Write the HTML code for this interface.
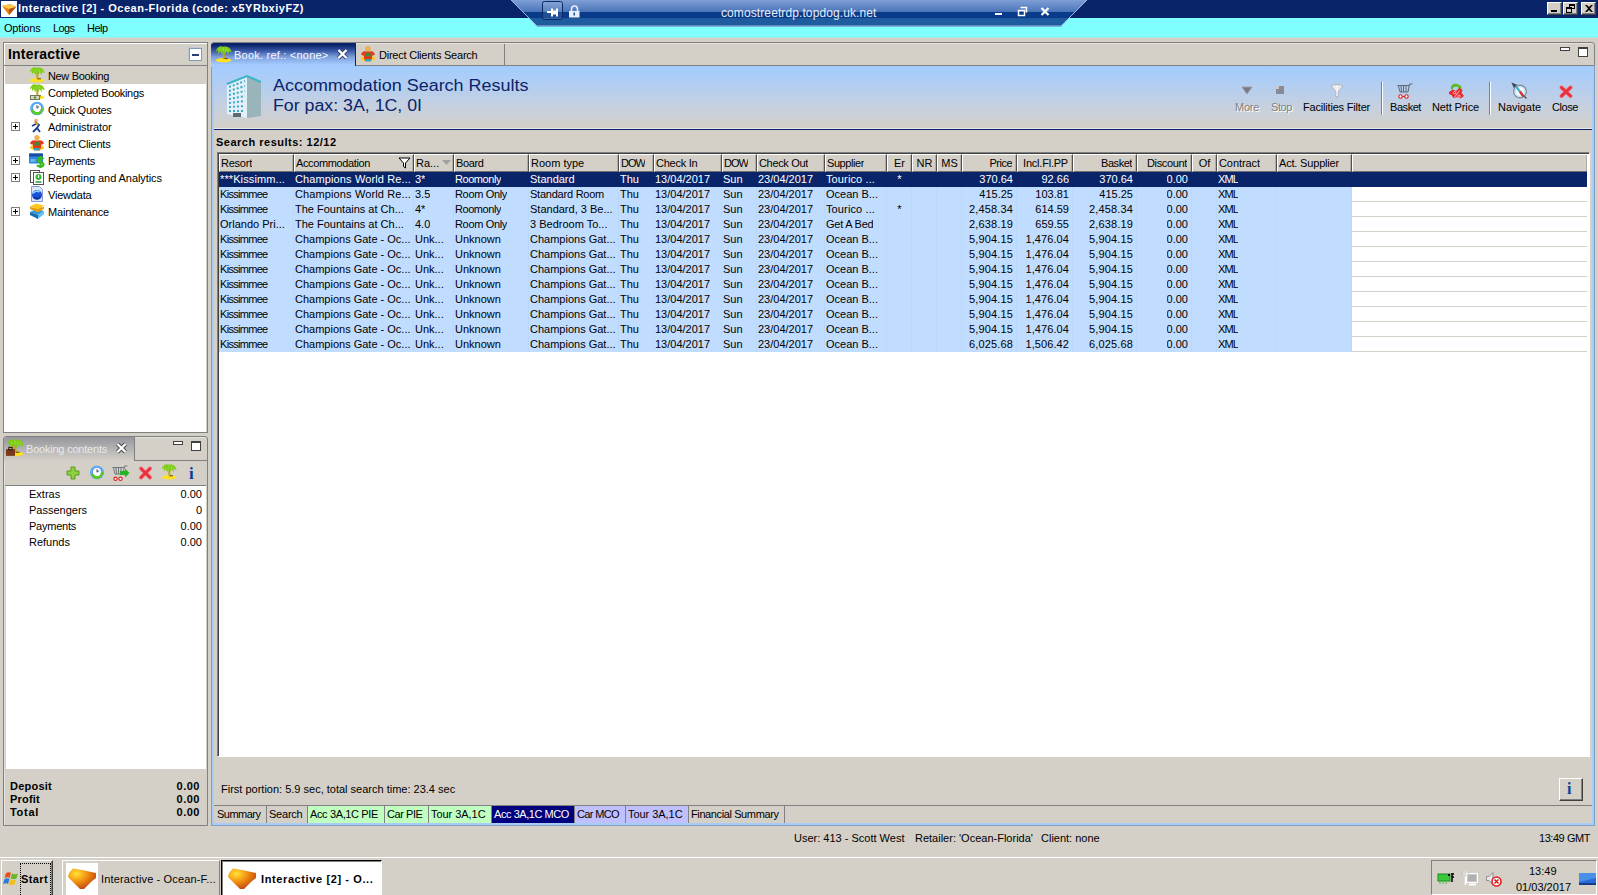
<!DOCTYPE html>
<html><head><meta charset="utf-8"><title>Interactive [2] - Ocean-Florida</title>
<style>
html,body{margin:0;padding:0}
body{width:1598px;height:895px;overflow:hidden;background:#d4d0c8;font-family:"Liberation Sans",sans-serif;font-size:11px;color:#000;position:relative}
.a{position:absolute;white-space:nowrap;box-sizing:border-box}
.t{position:absolute;white-space:nowrap;line-height:13px;height:13px}
svg{position:absolute;overflow:visible}
.b{font-weight:bold}
.w{color:#fff}
.g{color:#808080;text-shadow:1px 1px 0 #fff}
.hd{position:absolute;top:154px;height:18px;box-sizing:border-box;background:#d4d0c8;border-top:1px solid #fff;border-left:1px solid #fff;border-right:1px solid #505050;border-bottom:1px solid #707070;box-shadow:inset -1px 0 0 #b0aca4}
.row{position:absolute;left:219px;width:1133px;height:15px;background:#c0dcff}
.c{position:absolute;top:2px;line-height:13px;height:13px;white-space:nowrap;overflow:hidden}
.btab{position:absolute;top:806px;height:17px;box-sizing:border-box;border-right:1px solid #808080;line-height:16px;padding-left:3px;white-space:nowrap}
</style></head><body>
<div class="a " style="left:0px;top:0px;width:1598px;height:18px;background:#0a246a"></div>
<div class="a " style="left:0px;top:18px;width:1598px;height:19px;background:#80ffff"></div>
<div class="a " style="left:0px;top:37px;width:1598px;height:1px;background:#aae8e4"></div>
<div class="t b w" style="top:2px;left:18px;letter-spacing:.5px">Interactive [2] - Ocean-Florida (code: x5YRbxiyFZ)</div>
<div class="t " style="top:22px;left:4px;letter-spacing:-0.20px;">Options</div>
<div class="t " style="top:22px;left:53px;letter-spacing:-0.59px;">Logs</div>
<div class="t " style="top:22px;left:87px;letter-spacing:-0.53px;">Help</div>
<svg style="left:1px;top:1px" width="16" height="16" viewBox="0 0 16 16"><rect width="16" height="16" fill="#fff"/><path d="M1 5 L9 3 L15 6 L8 14 Z" fill="#e8851a"/><path d="M1 5 L9 3 L15 6 L8 8 Z" fill="#ffc84a"/><path d="M8 8 L15 6 L8 14 Z" fill="#b4500f"/></svg>
<div class="a" style="left:1547px;top:2px;width:15px;height:13px;background:#d4d0c8;border:1px solid;border-color:#fff #404040 #404040 #fff;box-shadow:inset -1px -1px 0 #808080"></div>
<div class="a " style="left:1551px;top:10px;width:6px;height:2px;background:#000"></div>
<div class="a" style="left:1563px;top:2px;width:15px;height:13px;background:#d4d0c8;border:1px solid;border-color:#fff #404040 #404040 #fff;box-shadow:inset -1px -1px 0 #808080"></div>
<div class="a " style="left:1569px;top:4px;width:6px;height:5px;border:1px solid #000;border-top-width:2px"></div>
<div class="a " style="left:1566px;top:7px;width:6px;height:6px;border:1px solid #000;border-top-width:2px;background:#d4d0c8"></div>
<div class="a" style="left:1581px;top:2px;width:15px;height:13px;background:#d4d0c8;border:1px solid;border-color:#fff #404040 #404040 #fff;box-shadow:inset -1px -1px 0 #808080"></div>
<svg style="left:1585px;top:5px" width="8" height="7" viewBox="0 0 8 7"><path d="M0 0h2l2 2 2-2h2L5 3.5 8 7H6L4 5 2 7H0l3-3.5z" fill="#000"/></svg>
<svg style="left:505px;top:0" width="590" height="30" viewBox="505 0 590 30">
<defs><linearGradient id="rg" x1="0" y1="0" x2="0" y2="1"><stop offset="0" stop-color="#7f9fd6"/><stop offset=".45" stop-color="#4a74b8"/><stop offset=".46" stop-color="#0a3a8a"/><stop offset=".68" stop-color="#0a3a8a"/><stop offset=".7" stop-color="#1f5c9f"/><stop offset="1" stop-color="#1f5c9f"/></linearGradient></defs>
<path d="M511 0 L1087 0 L1061 26.5 L537 26.5 Z" fill="url(#rg)"/>
<path d="M511 0 L537 26 L1061 26 L1087 0" fill="none" stroke="#9bb8e0" stroke-width="1"/>
<rect x="542.5" y="1.5" width="20" height="18" rx="2" fill="rgba(255,255,255,.1)" stroke="#0a2a66"/>
<path d="M547 12h5M552 8.500v8M553 11.500h4v2h-4zM557 8.500v8" stroke="#fff" stroke-width="2" fill="none"/>
<path d="M571.500 11.500v-2.500a3 3 0 0 1 6 0V11.500" stroke="#e8eefc" stroke-width="1.600" fill="none"/><rect x="569" y="11" width="10.500" height="6.500" fill="#e8eefc"/><rect x="573.500" y="12.500" width="1.500" height="3" fill="#1f4c8f"/>
<rect x="995" y="13" width="7" height="2" fill="#fff"/>
<path d="M1020.500 7.500h6v5M1018.500 10.500h6v5h-6z" stroke="#fff" stroke-width="1.500" fill="none"/>
<path d="M1041.500 8 l7 7 M1048.500 8 l-7 7" stroke="#fff" stroke-width="2.200"/>
</svg>
<div class="t " style="top:7px;left:721px;color:#e4ecf8;font-size:12px;letter-spacing:.1px">comostreetrdp.topdog.uk.net</div>
<div class="a " style="left:3px;top:42px;width:205px;height:391px;border:1px solid #808080;background:#d4d0c8;box-shadow:inset 1px 1px 0 #fff"></div>
<div class="t b" style="top:46px;left:8px;font-size:14px;line-height:17px;height:17px;letter-spacing:.2px">Interactive</div>
<div class="a " style="left:4px;top:65px;width:203px;height:1px;background:#808080"></div>
<div class="a " style="left:5px;top:66px;width:201px;height:366px;background:#fff"></div>
<div class="a " style="left:5px;top:66px;width:201px;height:18px;background:#d4d0c8"></div>
<div class="a " style="left:189px;top:48px;width:13px;height:13px;border:1px solid #7f9db9;background:#fff;box-shadow:-1px -1px 0 #c0c8d8"></div>
<div class="a " style="left:192px;top:54px;width:7px;height:1px;background:#2a3f7a;height:2px"></div>
<div class="t " style="top:70px;left:48px;letter-spacing:-0.35px;">New Booking</div>
<svg style="left:29px;top:67px" width="16" height="16" viewBox="0 0 16 16"><ellipse cx="8" cy="13.300" rx="7.500" ry="2" fill="#ffe11e"/><path d="M8.500 5C8 8 8 10 8.800 12.500" stroke="#c4a414" stroke-width="2" fill="none"/><path d="M9 11.800h3" stroke="#6a4a0a" stroke-width="1"/><path d="M7.500 .8C4.500 -.8 1.500 1.500 .8 5.500L2.800 3.800 3 7.500 5 4.800 6 8.200 7.800 5.200 9.500 8 10.800 5 12.500 8.200 13 5 15.500 6.200C15.500 2.500 12 -.5 7.500 .8Z" fill="#7ccc18"/><path d="M4 2.500l2 2M8 1.500v3M11 2l-1 3M13 3.500l-1 2" stroke="#a8e03c" stroke-width=".8" fill="none"/></svg>
<div class="t " style="top:87px;left:48px;letter-spacing:-0.31px;">Completed Bookings</div>
<svg style="left:29px;top:84px" width="16" height="16" viewBox="0 0 16 16"><ellipse cx="8" cy="13.300" rx="7.500" ry="2" fill="#ffe11e"/><path d="M8.500 5C8 8 8 10 8.800 12.500" stroke="#c4a414" stroke-width="2" fill="none"/><path d="M9 11.800h3" stroke="#6a4a0a" stroke-width="1"/><path d="M7.500 .8C4.500 -.8 1.500 1.500 .8 5.500L2.800 3.800 3 7.500 5 4.800 6 8.200 7.800 5.200 9.500 8 10.800 5 12.500 8.200 13 5 15.500 6.200C15.500 2.500 12 -.5 7.500 .8Z" fill="#7ccc18"/><path d="M4 2.500l2 2M8 1.500v3M11 2l-1 3M13 3.500l-1 2" stroke="#a8e03c" stroke-width=".8" fill="none"/><rect x="1" y="11" width="10" height="5" fill="#6a7a5a"/><rect x="2" y="12" width="8" height="3" fill="#cfe0b8"/><circle cx="6" cy="13.500" r="1.200" fill="#6a7a5a"/></svg>
<div class="t " style="top:104px;left:48px;letter-spacing:-0.26px;">Quick Quotes</div>
<svg style="left:29px;top:101px" width="16" height="16" viewBox="0 0 16 16"><circle cx="8" cy="7.500" r="6.800" fill="#2f8ff0"/><circle cx="8" cy="7.500" r="5.800" fill="none" stroke="#8cc8ff" stroke-width=".8"/><circle cx="8" cy="7" r="4.300" fill="#fff"/><path d="M8 4.200V7.200L10.200 5.500" stroke="#404860" stroke-width="1" fill="none"/><path d="M2.200 9.500c1.500 5.500 9.500 6 12-.5l1.300 0-2.500-2.500-2 2.500 1.200 0c-2 3-6 3-8-.5z" fill="#5ccc1e"/></svg>
<div class="t " style="top:121px;left:48px;letter-spacing:-0.10px;">Administrator</div>
<svg style="left:29px;top:118px" width="16" height="16" viewBox="0 0 16 16"><circle cx="7" cy="2.500" r="1.800" fill="#f0b070"/><path d="M6 4l4 3-2 3 3 4M7 6l-4 2M8 10l-4 4" stroke="#1a3a9a" stroke-width="1.800" fill="none"/><path d="M6 4l3 3" stroke="#d0a020" stroke-width="2"/></svg>
<div class="a " style="left:11px;top:122px;width:9px;height:9px;border:1px solid #808080;background:#fff"></div>
<div class="a " style="left:13px;top:126px;width:5px;height:1px;background:#000"></div>
<div class="a " style="left:15px;top:124px;width:1px;height:5px;background:#000"></div>
<div class="t " style="top:138px;left:48px;letter-spacing:-0.21px;">Direct Clients</div>
<svg style="left:29px;top:135px" width="16" height="16" viewBox="0 0 16 16"><ellipse cx="8" cy="12.500" rx="7" ry="3" fill="#ffc81e"/><circle cx="8" cy="2.800" r="2.300" fill="#f8b84a" stroke="#e09020" stroke-width=".6"/><path d="M1 8.500C2 5 5 5 6 5.500h4c1-.5 4-.5 5 3l-2.500 1.500-.5-1.500v5H4v-5l-.5 1.500z" fill="#e8381a"/><rect x="5.500" y="7" width="5" height="3.500" fill="#3a8a3a"/><rect x="5" y="13" width="6" height="2.500" fill="#3aa0b8"/></svg>
<div class="t " style="top:155px;left:48px;letter-spacing:-0.24px;">Payments</div>
<svg style="left:29px;top:152px" width="16" height="16" viewBox="0 0 16 16"><rect x="0" y="1.500" width="14" height="10" rx="1" fill="#2a86e0"/><rect x="0" y="1.500" width="14" height="3" fill="#1a4e9e"/><rect x="1.500" y="7" width="5" height="3" fill="#6ab4f4"/><path d="M11.500 4v12M14.500 7.200c-1.500-2-6-1.500-6 1s6 1.500 6 4-4.500 3-6.500 1" stroke="#3cb81e" stroke-width="2.200" fill="none"/></svg>
<div class="a " style="left:11px;top:156px;width:9px;height:9px;border:1px solid #808080;background:#fff"></div>
<div class="a " style="left:13px;top:160px;width:5px;height:1px;background:#000"></div>
<div class="a " style="left:15px;top:158px;width:1px;height:5px;background:#000"></div>
<div class="t " style="top:172px;left:48px;letter-spacing:-0.07px;">Reporting and Analytics</div>
<svg style="left:29px;top:169px" width="16" height="16" viewBox="0 0 16 16"><rect x="1.500" y="1.500" width="9" height="12" fill="#fff" stroke="#555"/><rect x="4.500" y="3.500" width="10" height="12" fill="#fff" stroke="#555"/><circle cx="9.500" cy="8" r="3" fill="#2fb82f"/><path d="M9.500 6v3" stroke="#fff" stroke-width="1.200"/><path d="M6.500 13h6" stroke="#2a9a3a" stroke-width="1.500"/></svg>
<div class="a " style="left:11px;top:173px;width:9px;height:9px;border:1px solid #808080;background:#fff"></div>
<div class="a " style="left:13px;top:177px;width:5px;height:1px;background:#000"></div>
<div class="a " style="left:15px;top:175px;width:1px;height:5px;background:#000"></div>
<div class="t " style="top:189px;left:48px;letter-spacing:-0.20px;">Viewdata</div>
<svg style="left:29px;top:186px" width="16" height="16" viewBox="0 0 16 16"><path d="M2.500 .5h8l3 3v12h-11z" fill="#dfe6fa" stroke="#8a9ad0"/><circle cx="8" cy="9" r="5" fill="#1a50d8"/><path d="M4 7.500c1.500-2.500 4.500-3 6.500-1.500" stroke="#8ad4ff" stroke-width="1.600" fill="none"/><path d="M5 11c2 2 5 2 6.500-.5" stroke="#0a2a8a" stroke-width="1.200" fill="none"/></svg>
<div class="t " style="top:206px;left:48px;letter-spacing:-0.18px;">Maintenance</div>
<svg style="left:29px;top:203px" width="16" height="16" viewBox="0 0 16 16"><path d="M1 9l6-3 8 2-6 4z" fill="#2a9ae0"/><path d="M1 9v3l8 4v-4z" fill="#1a6ab0"/><path d="M9 12l6-4v3l-6 5z" fill="#5cc0f0"/><path d="M1 6l6-3 8 2-6 4z" fill="#f08a1a"/><path d="M1 3.500l6-3 8 2-6 4z" fill="#ffc81e"/><path d="M1 3.500v2l8 4 6-4v-2l-6 4z" fill="#e0a010"/></svg>
<div class="a " style="left:11px;top:207px;width:9px;height:9px;border:1px solid #808080;background:#fff"></div>
<div class="a " style="left:13px;top:211px;width:5px;height:1px;background:#000"></div>
<div class="a " style="left:15px;top:209px;width:1px;height:5px;background:#000"></div>
<div class="a " style="left:3px;top:436px;width:205px;height:390px;border:1px solid #808080;border-radius:3px 3px 0 0;background:#d4d0c8;box-shadow:inset 1px 1px 0 #e4e2dc"></div>
<div class="a " style="left:4px;top:437px;width:131px;height:24px;background:linear-gradient(#96969c,#b4b3b4 50%,#d4d0c8);border-right:1px solid #808080;border-radius:3px 0 0 0"></div>
<div class="a " style="left:135px;top:460px;width:72px;height:1px;background:#808080"></div>
<div class="t " style="top:443px;left:26px;letter-spacing:-0.21px;color:#e8e8ea">Booking contents</div>
<svg style="left:116px;top:443px" width="11" height="10" viewBox="0 0 11 10"><path d="M1.500 1l8 8M9.500 1l-8 8" stroke="#404040" stroke-width="4"/><path d="M1.500 1l8 8M9.500 1l-8 8" stroke="#fff" stroke-width="2.400"/></svg>
<svg style="left:6px;top:439px" width="18" height="18" viewBox="0 0 16 16"><ellipse cx="8" cy="13.300" rx="7.500" ry="2" fill="#ffe11e"/><path d="M8.500 5C8 8 8 10 8.800 12.500" stroke="#c4a414" stroke-width="2" fill="none"/><path d="M9 11.800h3" stroke="#6a4a0a" stroke-width="1"/><path d="M7.500 .8C4.500 -.8 1.500 1.500 .8 5.500L2.800 3.800 3 7.500 5 4.800 6 8.200 7.800 5.200 9.500 8 10.800 5 12.500 8.200 13 5 15.500 6.200C15.500 2.500 12 -.5 7.500 .8Z" fill="#7ccc18"/><path d="M4 2.500l2 2M8 1.500v3M11 2l-1 3M13 3.500l-1 2" stroke="#a8e03c" stroke-width=".8" fill="none"/><rect x="0" y="9" width="8" height="6" fill="#7a3a1a"/><rect x="2.500" y="7.500" width="3" height="2" fill="none" stroke="#3a1a0a"/></svg>
<div class="a " style="left:173px;top:441px;width:10px;height:4px;border:1px solid #404040;background:#fff"></div>
<div class="a " style="left:191px;top:441px;width:10px;height:10px;border:1px solid #404040;border-top-width:2px;background:#fff"></div>
<div class="a " style="left:5px;top:485px;width:201px;height:1px;background:#808080"></div>
<div class="a " style="left:6px;top:486px;width:200px;height:283px;background:#fff"></div>
<svg style="left:66px;top:466px" width="14" height="14" viewBox="0 0 14 14"><path d="M5 1h4v4h4v4H9v4H5V9H1V5h4z" fill="#8cd23c" stroke="#5a9a1a"/></svg>
<svg style="left:89px;top:465px" width="16" height="16" viewBox="0 0 16 16"><circle cx="8" cy="7.500" r="6.800" fill="#2f8ff0"/><circle cx="8" cy="7.500" r="5.800" fill="none" stroke="#8cc8ff" stroke-width=".8"/><circle cx="8" cy="7" r="4.300" fill="#fff"/><path d="M8 4.200V7.200L10.200 5.500" stroke="#404860" stroke-width="1" fill="none"/><path d="M2.200 9.500c1.500 5.500 9.500 6 12-.5l1.300 0-2.500-2.500-2 2.500 1.200 0c-2 3-6 3-8-.5z" fill="#5ccc1e"/></svg>
<svg style="left:112px;top:465px" width="18" height="17" viewBox="0 0 18 17"><path d="M.5 2.500h12M1.500 3l1.500 6h8M4 3l.5 6M6.500 3v6M9 3v6M11 9l1.500-8h3" stroke="#707880" stroke-width="1" fill="none"/><circle cx="3.500" cy="13.800" r="1.700" fill="#fff" stroke="#e02020" stroke-width="1.100"/><circle cx="8.500" cy="13.800" r="1.700" fill="#fff" stroke="#e02020" stroke-width="1.100"/><path d="M8 6h5V3.500L17.500 8 13 12.500V10H8z" fill="#22b422"/></svg>
<svg style="left:139px;top:467px" width="13" height="12" viewBox="0 0 13 12"><path d="M2 1.500l9 9M11 1.500l-9 9" stroke="#f08a94" stroke-width="4.200" stroke-linecap="round"/><path d="M2 1.500l9 9M11 1.500l-9 9" stroke="#e8323e" stroke-width="2.800" stroke-linecap="round"/></svg>
<svg style="left:161px;top:464px" width="16" height="16" viewBox="0 0 16 16"><ellipse cx="8" cy="13.300" rx="7.500" ry="2" fill="#ffe11e"/><path d="M8.500 5C8 8 8 10 8.800 12.500" stroke="#c4a414" stroke-width="2" fill="none"/><path d="M9 11.800h3" stroke="#6a4a0a" stroke-width="1"/><path d="M7.500 .8C4.500 -.8 1.500 1.500 .8 5.500L2.800 3.800 3 7.500 5 4.800 6 8.200 7.800 5.200 9.500 8 10.800 5 12.500 8.200 13 5 15.500 6.200C15.500 2.500 12 -.5 7.500 .8Z" fill="#7ccc18"/><path d="M4 2.500l2 2M8 1.500v3M11 2l-1 3M13 3.500l-1 2" stroke="#a8e03c" stroke-width=".8" fill="none"/></svg>
<div class="t b" style="top:465px;left:189px;font-family:'Liberation Serif',serif;font-size:17px;color:#0a3a9a;line-height:17px;height:17px">i</div>
<div class="t " style="top:488px;left:29px;">Extras</div>
<div class="t " style="top:488px;right:1396px;">0.00</div>
<div class="t " style="top:504px;left:29px;">Passengers</div>
<div class="t " style="top:504px;right:1396px;">0</div>
<div class="t " style="top:520px;left:29px;letter-spacing:-0.24px;">Payments</div>
<div class="t " style="top:520px;right:1396px;">0.00</div>
<div class="t " style="top:536px;left:29px;">Refunds</div>
<div class="t " style="top:536px;right:1396px;">0.00</div>
<div class="t b" style="top:780px;left:10px;letter-spacing:0.24px;">Deposit</div>
<div class="t b" style="top:780px;right:1398px;letter-spacing:0.52px;">0.00</div>
<div class="t b" style="top:793px;left:10px;letter-spacing:0.21px;">Profit</div>
<div class="t b" style="top:793px;right:1398px;letter-spacing:0.52px;">0.00</div>
<div class="t b" style="top:806px;left:10px;letter-spacing:0.71px;">Total</div>
<div class="t b" style="top:806px;right:1398px;letter-spacing:0.52px;">0.00</div>
<div class="a " style="left:211px;top:66px;width:1384px;height:760px;border:1px solid #7f9fc8;border-top:none;background:#d4d0c8"></div>
<div class="a " style="left:212px;top:66px;width:1382px;height:759px;border:2px solid #a8ccf4;border-top:none"></div>
<div class="a " style="left:211px;top:42px;width:1384px;height:24px;background:#d4d0c8;border:1px solid #808080;border-radius:3px 3px 0 0;box-shadow:inset 1px 1px 0 #e6e4de"></div>
<div class="a " style="left:211px;top:43px;width:145px;height:24px;background:linear-gradient(#0a246a 0,#0a246a 2px,#3a5aa8 8px,#7fa0dc 14px,#a4ccff 22px);border-radius:3px 0 0 0;border-right:1px solid #0a246a"></div>
<div class="t " style="top:49px;left:234px;letter-spacing:0.22px;color:#f4f8ff">Book. ref.: &lt;none&gt;</div>
<svg style="left:337px;top:49px" width="11" height="10" viewBox="0 0 11 10"><path d="M1.500 1l8 8M9.500 1l-8 8" stroke="#30406a" stroke-width="4"/><path d="M1.500 1l8 8M9.500 1l-8 8" stroke="#fff" stroke-width="2.400"/></svg>
<svg style="left:215px;top:46px" width="17" height="17" viewBox="0 0 16 16"><ellipse cx="8" cy="13.300" rx="7.500" ry="2" fill="#ffe11e"/><path d="M8.500 5C8 8 8 10 8.800 12.500" stroke="#c4a414" stroke-width="2" fill="none"/><path d="M9 11.800h3" stroke="#6a4a0a" stroke-width="1"/><path d="M7.500 .8C4.500 -.8 1.500 1.500 .8 5.500L2.800 3.800 3 7.500 5 4.800 6 8.200 7.800 5.200 9.500 8 10.800 5 12.500 8.200 13 5 15.500 6.200C15.500 2.500 12 -.5 7.500 .8Z" fill="#7ccc18"/><path d="M4 2.500l2 2M8 1.500v3M11 2l-1 3M13 3.500l-1 2" stroke="#a8e03c" stroke-width=".8" fill="none"/></svg>
<div class="a " style="left:504px;top:44px;width:1px;height:22px;background:#808080"></div>
<svg style="left:360px;top:46px" width="16" height="16" viewBox="0 0 16 16"><ellipse cx="8" cy="12.500" rx="7" ry="3" fill="#ffc81e"/><circle cx="8" cy="2.800" r="2.300" fill="#f8b84a" stroke="#e09020" stroke-width=".6"/><path d="M1 8.500C2 5 5 5 6 5.500h4c1-.5 4-.5 5 3l-2.500 1.500-.5-1.500v5H4v-5l-.5 1.500z" fill="#e8381a"/><rect x="5.500" y="7" width="5" height="3.500" fill="#3a8a3a"/><rect x="5" y="13" width="6" height="2.500" fill="#3aa0b8"/></svg>
<div class="t " style="top:49px;left:379px;letter-spacing:-0.23px;">Direct Clients Search</div>
<div class="a " style="left:1560px;top:47px;width:10px;height:4px;border:1px solid #404040;background:#fff"></div>
<div class="a " style="left:1578px;top:47px;width:10px;height:10px;border:1px solid #404040;border-top-width:2px;background:#fff"></div>
<div class="a " style="left:214px;top:66px;width:1378px;height:62px;background:linear-gradient(#a2ccff,#b2cef2 30%,#c6d0e0 65%,#d4d0c8)"></div>
<div class="a " style="left:214px;top:128px;width:1378px;height:1px;background:#e8e8f0"></div>
<div class="a " style="left:214px;top:129px;width:1378px;height:1px;background:#0a246a"></div>
<div class="t " style="top:76.5px;left:273px;font-size:16px;line-height:18px;height:18px;color:#0a246a;transform:scaleX(1.122);transform-origin:0 0">Accommodation Search Results</div>
<div class="t " style="top:96.5px;left:273px;font-size:16px;line-height:18px;height:18px;color:#0a246a;transform:scaleX(1.11);transform-origin:0 0">For pax: 3A, 1C, 0I</div>
<svg style="left:224px;top:72px" width="40" height="50" viewBox="0 0 40 50"><path d="M3 12l20-8v42l-20-4z" fill="#e4f0f8"/><path d="M23 4l14 6v34l-14 2z" fill="#9ab4bc"/><path d="M3 12l20-8 14 6" fill="none" stroke="#3ab4c8" stroke-width="2"/><g stroke="#3aa8c8" stroke-width="2" stroke-dasharray="2 2"><path d="M5 15l16-6M5 19l16-5M5 23l16-4M5 27l16-3M5 31l16-2M5 35l16-1M5 39h16"/></g><rect x="9" y="41" width="8" height="4" fill="#5a6a70"/></svg>
<div class="t g" style="top:101px;left:1235px;letter-spacing:-0.27px;">More</div>
<div class="t g" style="top:101px;left:1271px;letter-spacing:-0.41px;">Stop</div>
<div class="t " style="top:101px;left:1303px;letter-spacing:-0.19px;">Facilities Filter</div>
<div class="t " style="top:101px;left:1390px;letter-spacing:-0.44px;">Basket</div>
<div class="t " style="top:101px;left:1432px;letter-spacing:-0.13px;">Nett Price</div>
<div class="t " style="top:101px;left:1498px;letter-spacing:-0.05px;">Navigate</div>
<div class="t " style="top:101px;left:1552px;letter-spacing:-0.42px;">Close</div>
<div class="a " style="left:1381px;top:82px;width:1px;height:33px;background:#808080;box-shadow:1px 0 0 #fff"></div>
<div class="a " style="left:1489px;top:82px;width:1px;height:33px;background:#808080;box-shadow:1px 0 0 #fff"></div>
<svg style="left:1241px;top:86px" width="12" height="10" viewBox="0 0 12 10"><path d="M1 1h10L6 8z" fill="#7a7a84" stroke="#9a9aa4"/></svg>
<svg style="left:1276px;top:86px" width="9" height="9" viewBox="0 0 9 9"><rect x="0" y="0" width="8" height="8" fill="#8a8a94"/><rect x="0" y="0" width="3" height="3" fill="#c8c8d0"/></svg>
<svg style="left:1330px;top:84px" width="14" height="14" viewBox="0 0 14 14"><path d="M1 2c2-2 10-2 12 0L8 8v5H6V8z" fill="#e8e8ee" stroke="#b0b0b8"/><path d="M7 2v10" stroke="#fff"/></svg>
<svg style="left:1397px;top:83px" width="17" height="17" viewBox="0 0 17 17"><path d="M.5 2.500h12M1.500 3l1.500 6h8M4 3l.5 6M6.500 3v6M9 3v6M11 9l1.500-8h3" stroke="#606870" stroke-width="1" fill="none"/><circle cx="3.500" cy="13.500" r="1.700" fill="#fff" stroke="#e02020" stroke-width="1.100"/><circle cx="9.500" cy="13.500" r="1.700" fill="#fff" stroke="#e02020" stroke-width="1.100"/><path d="M5.200 13.500h2.600" stroke="#e02020"/></svg>
<svg style="left:1448px;top:83px" width="17" height="16" viewBox="0 0 17 16"><path d="M3 6c-1-5 6-7 9-3l1-1 .5 4-4-.5 1-1c-2-2-6-1-6 2.500z" fill="#5cb81e"/><path d="M1 9l4-2.500 3 1.500 3.500-3 3 2-1 3 2.500 3-3.500 2.500-4-1.500-3 1-2-3-2.500-1z" fill="#e8262e"/><path d="M6.500 8.500a1.200 1.200 0 1 0 .1 0M11 12a1.200 1.200 0 1 0 .1 0M11.500 7.500l-5 6.500" stroke="#ffd0d0" stroke-width=".9" fill="none"/></svg>
<svg style="left:1511px;top:82px" width="18" height="18" viewBox="0 0 18 18"><circle cx="9" cy="9.500" r="6.300" fill="#f4f8fc" stroke="#8090a0" stroke-width="1.400"/><circle cx="9" cy="9.500" r="4.800" fill="none" stroke="#b8e0f0" stroke-width="1"/><path d="M5.500 5l7 9.500" stroke="#38b4d0" stroke-width="2.200"/><path d="M9 9.500l3.500 5" stroke="#e03030" stroke-width="2.200"/><path d="M1.500 1.500l3.500 1.500-2 2zM13 14l2.500 2.500" fill="#404850" stroke="#404850" stroke-width="1.200"/></svg>
<svg style="left:1559px;top:85px" width="14" height="13" viewBox="0 0 14 13"><path d="M2.500 2.500l9 8.500M11.500 2.500l-9 8.500" stroke="#f08a94" stroke-width="4.400" stroke-linecap="round"/><path d="M2.500 2.500l9 8.500M11.500 2.500l-9 8.500" stroke="#e8323e" stroke-width="3" stroke-linecap="round"/></svg>
<div class="t b" style="top:136px;left:216px;letter-spacing:0.50px;">Search results: 12/12</div>
<div class="a " style="left:217px;top:152px;width:1373px;height:605px;border:1px solid;border-color:#808080 #fff #fff #808080;background:#fff;box-shadow:inset 1px 1px 0 #404040"></div>
<div class="hd" style="left:219px;width:75px"><div class="c" style="left:1px;letter-spacing:-0.23px;">Resort</div></div>
<div class="hd" style="left:294px;width:120px"><div class="c" style="left:1px;letter-spacing:-0.38px;">Accommodation</div></div>
<div class="hd" style="left:414px;width:40px"><div class="c" style="left:1px;">Ra...</div></div>
<div class="hd" style="left:454px;width:75px"><div class="c" style="left:1px;letter-spacing:-0.37px;">Board</div></div>
<div class="hd" style="left:529px;width:90px"><div class="c" style="left:1px;">Room type</div></div>
<div class="hd" style="left:619px;width:35px"><div class="c" style="left:1px;letter-spacing:-0.96px;">DOW</div></div>
<div class="hd" style="left:654px;width:68px"><div class="c" style="left:1px;letter-spacing:-0.24px;">Check In</div></div>
<div class="hd" style="left:722px;width:35px"><div class="c" style="left:1px;letter-spacing:-0.96px;">DOW</div></div>
<div class="hd" style="left:757px;width:68px"><div class="c" style="left:1px;letter-spacing:-0.33px;">Check Out</div></div>
<div class="hd" style="left:825px;width:62px"><div class="c" style="left:1px;letter-spacing:-0.42px;">Supplier</div></div>
<div class="hd" style="left:887px;width:25px"><div class="c" style="left:0;right:0;text-align:center;">Er</div></div>
<div class="hd" style="left:912px;width:25px"><div class="c" style="left:0;right:0;text-align:center;">NR</div></div>
<div class="hd" style="left:937px;width:25px"><div class="c" style="left:0;right:0;text-align:center;">MS</div></div>
<div class="hd" style="left:962px;width:55px"><div class="c" style="right:4px;letter-spacing:-0.51px;">Price</div></div>
<div class="hd" style="left:1017px;width:56px"><div class="c" style="right:4px;letter-spacing:-0.21px;">Incl.Fl.PP</div></div>
<div class="hd" style="left:1073px;width:64px"><div class="c" style="right:4px;letter-spacing:-0.44px;">Basket</div></div>
<div class="hd" style="left:1137px;width:55px"><div class="c" style="right:4px;letter-spacing:-0.35px;">Discount</div></div>
<div class="hd" style="left:1192px;width:25px"><div class="c" style="left:0;right:0;text-align:center;">Of</div></div>
<div class="hd" style="left:1217px;width:60px"><div class="c" style="left:1px;letter-spacing:-0.07px;">Contract</div></div>
<div class="hd" style="left:1277px;width:75px"><div class="c" style="left:1px;letter-spacing:-0.18px;">Act. Supplier</div></div>
<div class="hd" style="left:1352px;width:235px;border-right:none"></div>
<svg style="left:398px;top:157px" width="14" height="12" viewBox="0 0 14 12"><path d="M1 1h11L7.500 6v5l-2-1.500V6z" fill="#fff" stroke="#000" stroke-width="1"/></svg>
<svg style="left:442px;top:160px" width="9" height="6" viewBox="0 0 9 6"><path d="M0 0h9L4.500 5z" fill="#a0a0a0"/></svg>
<div class="a " style="left:219px;top:172px;width:1368px;height:15px;background:#0a246a"></div>
<div class="row" style="top:172px;background:#0a246a;color:#fff">
<div class="c" style="top:1px;left:1px;letter-spacing:0.11px;">***Kissimm...</div>
<div class="c" style="top:1px;left:76px;letter-spacing:0.12px;">Champions World Re...</div>
<div class="c" style="top:1px;left:196px;">3*</div>
<div class="c" style="top:1px;left:236px;letter-spacing:-0.44px;">Roomonly</div>
<div class="c" style="top:1px;left:311px;">Standard</div>
<div class="c" style="top:1px;left:401px;">Thu</div>
<div class="c" style="top:1px;left:436px;">13/04/2017</div>
<div class="c" style="top:1px;left:504px;">Sun</div>
<div class="c" style="top:1px;left:539px;">23/04/2017</div>
<div class="c" style="top:1px;left:607px;letter-spacing:0.12px;">Tourico ...</div>
<div class="c" style="top:1px;left:668px;width:25px;text-align:center">*</div>
<div class="c" style="top:1px;right:339px;">370.64</div>
<div class="c" style="top:1px;right:283px;">92.66</div>
<div class="c" style="top:1px;right:219px;">370.64</div>
<div class="c" style="top:1px;right:164px;">0.00</div>
<div class="c" style="top:1px;left:999px;letter-spacing:-0.88px;">XML</div>
</div>
<div class="row" style="top:187px">
<div class="c" style="top:1px;left:1px;letter-spacing:-0.70px;">Kissimmee</div>
<div class="c" style="top:1px;left:76px;letter-spacing:0.12px;">Champions World Re...</div>
<div class="c" style="top:1px;left:196px;">3.5</div>
<div class="c" style="top:1px;left:236px;letter-spacing:-0.34px;">Room Only</div>
<div class="c" style="top:1px;left:311px;letter-spacing:-0.23px;">Standard Room</div>
<div class="c" style="top:1px;left:401px;">Thu</div>
<div class="c" style="top:1px;left:436px;">13/04/2017</div>
<div class="c" style="top:1px;left:504px;">Sun</div>
<div class="c" style="top:1px;left:539px;">23/04/2017</div>
<div class="c" style="top:1px;left:607px;">Ocean B...</div>
<div class="c" style="top:1px;right:339px;">415.25</div>
<div class="c" style="top:1px;right:283px;">103.81</div>
<div class="c" style="top:1px;right:219px;">415.25</div>
<div class="c" style="top:1px;right:164px;">0.00</div>
<div class="c" style="top:1px;left:999px;letter-spacing:-0.88px;">XML</div>
</div>
<div class="a " style="left:1352px;top:201px;width:235px;height:1px;background:#d4d0c8"></div>
<div class="row" style="top:202px">
<div class="c" style="top:1px;left:1px;letter-spacing:-0.70px;">Kissimmee</div>
<div class="c" style="top:1px;left:76px;">The Fountains at Ch...</div>
<div class="c" style="top:1px;left:196px;">4*</div>
<div class="c" style="top:1px;left:236px;letter-spacing:-0.44px;">Roomonly</div>
<div class="c" style="top:1px;left:311px;">Standard, 3 Be...</div>
<div class="c" style="top:1px;left:401px;">Thu</div>
<div class="c" style="top:1px;left:436px;">13/04/2017</div>
<div class="c" style="top:1px;left:504px;">Sun</div>
<div class="c" style="top:1px;left:539px;">23/04/2017</div>
<div class="c" style="top:1px;left:607px;letter-spacing:0.12px;">Tourico ...</div>
<div class="c" style="top:1px;left:668px;width:25px;text-align:center">*</div>
<div class="c" style="top:1px;right:339px;letter-spacing:0.15px;">2,458.34</div>
<div class="c" style="top:1px;right:283px;">614.59</div>
<div class="c" style="top:1px;right:219px;letter-spacing:0.15px;">2,458.34</div>
<div class="c" style="top:1px;right:164px;">0.00</div>
<div class="c" style="top:1px;left:999px;letter-spacing:-0.88px;">XML</div>
</div>
<div class="a " style="left:1352px;top:216px;width:235px;height:1px;background:#d4d0c8"></div>
<div class="row" style="top:217px">
<div class="c" style="top:1px;left:1px;">Orlando Pri...</div>
<div class="c" style="top:1px;left:76px;">The Fountains at Ch...</div>
<div class="c" style="top:1px;left:196px;">4.0</div>
<div class="c" style="top:1px;left:236px;letter-spacing:-0.34px;">Room Only</div>
<div class="c" style="top:1px;left:311px;">3 Bedroom To...</div>
<div class="c" style="top:1px;left:401px;">Thu</div>
<div class="c" style="top:1px;left:436px;">13/04/2017</div>
<div class="c" style="top:1px;left:504px;">Sun</div>
<div class="c" style="top:1px;left:539px;">23/04/2017</div>
<div class="c" style="top:1px;left:607px;letter-spacing:-0.23px;">Get A Bed</div>
<div class="c" style="top:1px;right:339px;letter-spacing:0.15px;">2,638.19</div>
<div class="c" style="top:1px;right:283px;">659.55</div>
<div class="c" style="top:1px;right:219px;letter-spacing:0.15px;">2,638.19</div>
<div class="c" style="top:1px;right:164px;">0.00</div>
<div class="c" style="top:1px;left:999px;letter-spacing:-0.88px;">XML</div>
</div>
<div class="a " style="left:1352px;top:231px;width:235px;height:1px;background:#d4d0c8"></div>
<div class="row" style="top:232px">
<div class="c" style="top:1px;left:1px;letter-spacing:-0.70px;">Kissimmee</div>
<div class="c" style="top:1px;left:76px;">Champions Gate - Oc...</div>
<div class="c" style="top:1px;left:196px;">Unk...</div>
<div class="c" style="top:1px;left:236px;">Unknown</div>
<div class="c" style="top:1px;left:311px;">Champions Gat...</div>
<div class="c" style="top:1px;left:401px;">Thu</div>
<div class="c" style="top:1px;left:436px;">13/04/2017</div>
<div class="c" style="top:1px;left:504px;">Sun</div>
<div class="c" style="top:1px;left:539px;">23/04/2017</div>
<div class="c" style="top:1px;left:607px;">Ocean B...</div>
<div class="c" style="top:1px;right:339px;letter-spacing:0.15px;">5,904.15</div>
<div class="c" style="top:1px;right:283px;letter-spacing:0.08px;">1,476.04</div>
<div class="c" style="top:1px;right:219px;letter-spacing:0.15px;">5,904.15</div>
<div class="c" style="top:1px;right:164px;">0.00</div>
<div class="c" style="top:1px;left:999px;letter-spacing:-0.88px;">XML</div>
</div>
<div class="a " style="left:1352px;top:246px;width:235px;height:1px;background:#d4d0c8"></div>
<div class="row" style="top:247px">
<div class="c" style="top:1px;left:1px;letter-spacing:-0.70px;">Kissimmee</div>
<div class="c" style="top:1px;left:76px;">Champions Gate - Oc...</div>
<div class="c" style="top:1px;left:196px;">Unk...</div>
<div class="c" style="top:1px;left:236px;">Unknown</div>
<div class="c" style="top:1px;left:311px;">Champions Gat...</div>
<div class="c" style="top:1px;left:401px;">Thu</div>
<div class="c" style="top:1px;left:436px;">13/04/2017</div>
<div class="c" style="top:1px;left:504px;">Sun</div>
<div class="c" style="top:1px;left:539px;">23/04/2017</div>
<div class="c" style="top:1px;left:607px;">Ocean B...</div>
<div class="c" style="top:1px;right:339px;letter-spacing:0.15px;">5,904.15</div>
<div class="c" style="top:1px;right:283px;letter-spacing:0.08px;">1,476.04</div>
<div class="c" style="top:1px;right:219px;letter-spacing:0.15px;">5,904.15</div>
<div class="c" style="top:1px;right:164px;">0.00</div>
<div class="c" style="top:1px;left:999px;letter-spacing:-0.88px;">XML</div>
</div>
<div class="a " style="left:1352px;top:261px;width:235px;height:1px;background:#d4d0c8"></div>
<div class="row" style="top:262px">
<div class="c" style="top:1px;left:1px;letter-spacing:-0.70px;">Kissimmee</div>
<div class="c" style="top:1px;left:76px;">Champions Gate - Oc...</div>
<div class="c" style="top:1px;left:196px;">Unk...</div>
<div class="c" style="top:1px;left:236px;">Unknown</div>
<div class="c" style="top:1px;left:311px;">Champions Gat...</div>
<div class="c" style="top:1px;left:401px;">Thu</div>
<div class="c" style="top:1px;left:436px;">13/04/2017</div>
<div class="c" style="top:1px;left:504px;">Sun</div>
<div class="c" style="top:1px;left:539px;">23/04/2017</div>
<div class="c" style="top:1px;left:607px;">Ocean B...</div>
<div class="c" style="top:1px;right:339px;letter-spacing:0.15px;">5,904.15</div>
<div class="c" style="top:1px;right:283px;letter-spacing:0.08px;">1,476.04</div>
<div class="c" style="top:1px;right:219px;letter-spacing:0.15px;">5,904.15</div>
<div class="c" style="top:1px;right:164px;">0.00</div>
<div class="c" style="top:1px;left:999px;letter-spacing:-0.88px;">XML</div>
</div>
<div class="a " style="left:1352px;top:276px;width:235px;height:1px;background:#d4d0c8"></div>
<div class="row" style="top:277px">
<div class="c" style="top:1px;left:1px;letter-spacing:-0.70px;">Kissimmee</div>
<div class="c" style="top:1px;left:76px;">Champions Gate - Oc...</div>
<div class="c" style="top:1px;left:196px;">Unk...</div>
<div class="c" style="top:1px;left:236px;">Unknown</div>
<div class="c" style="top:1px;left:311px;">Champions Gat...</div>
<div class="c" style="top:1px;left:401px;">Thu</div>
<div class="c" style="top:1px;left:436px;">13/04/2017</div>
<div class="c" style="top:1px;left:504px;">Sun</div>
<div class="c" style="top:1px;left:539px;">23/04/2017</div>
<div class="c" style="top:1px;left:607px;">Ocean B...</div>
<div class="c" style="top:1px;right:339px;letter-spacing:0.15px;">5,904.15</div>
<div class="c" style="top:1px;right:283px;letter-spacing:0.08px;">1,476.04</div>
<div class="c" style="top:1px;right:219px;letter-spacing:0.15px;">5,904.15</div>
<div class="c" style="top:1px;right:164px;">0.00</div>
<div class="c" style="top:1px;left:999px;letter-spacing:-0.88px;">XML</div>
</div>
<div class="a " style="left:1352px;top:291px;width:235px;height:1px;background:#d4d0c8"></div>
<div class="row" style="top:292px">
<div class="c" style="top:1px;left:1px;letter-spacing:-0.70px;">Kissimmee</div>
<div class="c" style="top:1px;left:76px;">Champions Gate - Oc...</div>
<div class="c" style="top:1px;left:196px;">Unk...</div>
<div class="c" style="top:1px;left:236px;">Unknown</div>
<div class="c" style="top:1px;left:311px;">Champions Gat...</div>
<div class="c" style="top:1px;left:401px;">Thu</div>
<div class="c" style="top:1px;left:436px;">13/04/2017</div>
<div class="c" style="top:1px;left:504px;">Sun</div>
<div class="c" style="top:1px;left:539px;">23/04/2017</div>
<div class="c" style="top:1px;left:607px;">Ocean B...</div>
<div class="c" style="top:1px;right:339px;letter-spacing:0.15px;">5,904.15</div>
<div class="c" style="top:1px;right:283px;letter-spacing:0.08px;">1,476.04</div>
<div class="c" style="top:1px;right:219px;letter-spacing:0.15px;">5,904.15</div>
<div class="c" style="top:1px;right:164px;">0.00</div>
<div class="c" style="top:1px;left:999px;letter-spacing:-0.88px;">XML</div>
</div>
<div class="a " style="left:1352px;top:306px;width:235px;height:1px;background:#d4d0c8"></div>
<div class="row" style="top:307px">
<div class="c" style="top:1px;left:1px;letter-spacing:-0.70px;">Kissimmee</div>
<div class="c" style="top:1px;left:76px;">Champions Gate - Oc...</div>
<div class="c" style="top:1px;left:196px;">Unk...</div>
<div class="c" style="top:1px;left:236px;">Unknown</div>
<div class="c" style="top:1px;left:311px;">Champions Gat...</div>
<div class="c" style="top:1px;left:401px;">Thu</div>
<div class="c" style="top:1px;left:436px;">13/04/2017</div>
<div class="c" style="top:1px;left:504px;">Sun</div>
<div class="c" style="top:1px;left:539px;">23/04/2017</div>
<div class="c" style="top:1px;left:607px;">Ocean B...</div>
<div class="c" style="top:1px;right:339px;letter-spacing:0.15px;">5,904.15</div>
<div class="c" style="top:1px;right:283px;letter-spacing:0.08px;">1,476.04</div>
<div class="c" style="top:1px;right:219px;letter-spacing:0.15px;">5,904.15</div>
<div class="c" style="top:1px;right:164px;">0.00</div>
<div class="c" style="top:1px;left:999px;letter-spacing:-0.88px;">XML</div>
</div>
<div class="a " style="left:1352px;top:321px;width:235px;height:1px;background:#d4d0c8"></div>
<div class="row" style="top:322px">
<div class="c" style="top:1px;left:1px;letter-spacing:-0.70px;">Kissimmee</div>
<div class="c" style="top:1px;left:76px;">Champions Gate - Oc...</div>
<div class="c" style="top:1px;left:196px;">Unk...</div>
<div class="c" style="top:1px;left:236px;">Unknown</div>
<div class="c" style="top:1px;left:311px;">Champions Gat...</div>
<div class="c" style="top:1px;left:401px;">Thu</div>
<div class="c" style="top:1px;left:436px;">13/04/2017</div>
<div class="c" style="top:1px;left:504px;">Sun</div>
<div class="c" style="top:1px;left:539px;">23/04/2017</div>
<div class="c" style="top:1px;left:607px;">Ocean B...</div>
<div class="c" style="top:1px;right:339px;letter-spacing:0.15px;">5,904.15</div>
<div class="c" style="top:1px;right:283px;letter-spacing:0.08px;">1,476.04</div>
<div class="c" style="top:1px;right:219px;letter-spacing:0.15px;">5,904.15</div>
<div class="c" style="top:1px;right:164px;">0.00</div>
<div class="c" style="top:1px;left:999px;letter-spacing:-0.88px;">XML</div>
</div>
<div class="a " style="left:1352px;top:336px;width:235px;height:1px;background:#d4d0c8"></div>
<div class="row" style="top:337px">
<div class="c" style="top:1px;left:1px;letter-spacing:-0.70px;">Kissimmee</div>
<div class="c" style="top:1px;left:76px;">Champions Gate - Oc...</div>
<div class="c" style="top:1px;left:196px;">Unk...</div>
<div class="c" style="top:1px;left:236px;">Unknown</div>
<div class="c" style="top:1px;left:311px;">Champions Gat...</div>
<div class="c" style="top:1px;left:401px;">Thu</div>
<div class="c" style="top:1px;left:436px;">13/04/2017</div>
<div class="c" style="top:1px;left:504px;">Sun</div>
<div class="c" style="top:1px;left:539px;">23/04/2017</div>
<div class="c" style="top:1px;left:607px;">Ocean B...</div>
<div class="c" style="top:1px;right:339px;letter-spacing:0.15px;">6,025.68</div>
<div class="c" style="top:1px;right:283px;letter-spacing:0.08px;">1,506.42</div>
<div class="c" style="top:1px;right:219px;letter-spacing:0.15px;">6,025.68</div>
<div class="c" style="top:1px;right:164px;">0.00</div>
<div class="c" style="top:1px;left:999px;letter-spacing:-0.88px;">XML</div>
</div>
<div class="a " style="left:1352px;top:351px;width:235px;height:1px;background:#d4d0c8"></div>
<div class="a " style="left:293px;top:187px;width:1px;height:165px;background:#bad8fb"></div>
<div class="a " style="left:413px;top:187px;width:1px;height:165px;background:#bad8fb"></div>
<div class="a " style="left:453px;top:187px;width:1px;height:165px;background:#bad8fb"></div>
<div class="a " style="left:528px;top:187px;width:1px;height:165px;background:#bad8fb"></div>
<div class="a " style="left:618px;top:187px;width:1px;height:165px;background:#bad8fb"></div>
<div class="a " style="left:653px;top:187px;width:1px;height:165px;background:#bad8fb"></div>
<div class="a " style="left:721px;top:187px;width:1px;height:165px;background:#bad8fb"></div>
<div class="a " style="left:756px;top:187px;width:1px;height:165px;background:#bad8fb"></div>
<div class="a " style="left:824px;top:187px;width:1px;height:165px;background:#bad8fb"></div>
<div class="a " style="left:886px;top:187px;width:1px;height:165px;background:#bad8fb"></div>
<div class="a " style="left:911px;top:187px;width:1px;height:165px;background:#bad8fb"></div>
<div class="a " style="left:936px;top:187px;width:1px;height:165px;background:#bad8fb"></div>
<div class="a " style="left:961px;top:187px;width:1px;height:165px;background:#bad8fb"></div>
<div class="a " style="left:1016px;top:187px;width:1px;height:165px;background:#bad8fb"></div>
<div class="a " style="left:1072px;top:187px;width:1px;height:165px;background:#bad8fb"></div>
<div class="a " style="left:1136px;top:187px;width:1px;height:165px;background:#bad8fb"></div>
<div class="a " style="left:1191px;top:187px;width:1px;height:165px;background:#bad8fb"></div>
<div class="a " style="left:1216px;top:187px;width:1px;height:165px;background:#bad8fb"></div>
<div class="a " style="left:1276px;top:187px;width:1px;height:165px;background:#bad8fb"></div>
<div class="a " style="left:1351px;top:187px;width:1px;height:165px;background:#bad8fb"></div>
<div class="t " style="top:783px;left:221px;">First portion: 5.9 sec, total search time: 23.4 sec</div>
<div class="a " style="left:1559px;top:778px;width:24px;height:23px;background:#d4d0c8;border:1px solid;border-color:#fff #404040 #404040 #fff;box-shadow:inset -1px -1px 0 #808080"></div>
<div class="t b" style="top:780px;left:1567px;font-family:'Liberation Serif',serif;font-size:16px;color:#0a4096;line-height:18px;height:18px">i</div>
<div class="a " style="left:214px;top:805px;width:1378px;height:1px;background:#808080"></div>
<div class="btab" style="left:215px;width:52px;background:#d4d0c8;color:#000;letter-spacing:-0.51px;;padding-left:2px">Summary</div>
<div class="btab" style="left:267px;width:41px;background:#d4d0c8;color:#000;letter-spacing:-0.23px;;padding-left:2px">Search</div>
<div class="btab" style="left:308px;width:77px;background:#c0ffc0;color:#000;letter-spacing:-0.37px;;padding-left:2px">Acc 3A,1C PIE</div>
<div class="btab" style="left:385px;width:44px;background:#c0ffc0;color:#000;letter-spacing:-0.43px;;padding-left:2px">Car PIE</div>
<div class="btab" style="left:429px;width:63px;background:#c0ffc0;color:#000;letter-spacing:-0.05px;;padding-left:2px">Tour 3A,1C</div>
<div class="btab" style="left:492px;width:83px;background:#00007f;color:#fff;letter-spacing:-0.44px;;padding-left:2px">Acc 3A,1C MCO</div>
<div class="btab" style="left:575px;width:51px;background:#c0c0ff;color:#000;letter-spacing:-0.64px;;padding-left:2px">Car MCO</div>
<div class="btab" style="left:626px;width:63px;background:#c0c0ff;color:#000;letter-spacing:-0.05px;;padding-left:2px">Tour 3A,1C</div>
<div class="btab" style="left:689px;width:96px;background:#d4d0c8;color:#000;letter-spacing:-0.39px;;padding-left:2px">Financial Summary</div>
<div class="t " style="top:832px;left:794px;">User: 413 - Scott West</div>
<div class="t " style="top:832px;left:915px;">Retailer: &#x27;Ocean-Florida&#x27;</div>
<div class="t " style="top:832px;left:1041px;">Client: none</div>
<div class="t " style="top:832px;left:1539px;letter-spacing:-0.45px;">13:49 GMT</div>
<div class="a " style="left:0px;top:857px;width:1598px;height:1px;background:#fff"></div>
<div class="a " style="left:1px;top:860px;width:52px;height:40px;border:1px solid;border-color:#fff #404040 #404040 #fff;box-shadow:inset -1px 0 0 #808080"></div>
<div class="a " style="left:20px;top:863px;width:31px;height:40px;border:1px dotted #000"></div>
<div class="t b" style="top:873px;left:21px;font-size:11px;letter-spacing:.4px">Start</div>
<svg style="left:4px;top:870px" width="16" height="16" viewBox="0 0 16 16"><path d="M2 3c2-1 4-1 5 0l-1.500 5c-1-1-3-1-5 0z" fill="#e8501a"/><path d="M8 3.500c2 1 4 1 6 0l-1.500 5c-2 1-4 1-6 0z" fill="#6ab82a"/><path d="M.5 9c2-1 4-1 5 0l-1.500 5c-1-1-3-1-5 0z" fill="#2a7ad8"/><path d="M6 9.500c2 1 4 1 6 0l-1.500 5c-2 1-4 1-6 0z" fill="#f0c020"/></svg>
<div class="a " style="left:62px;top:860px;width:158px;height:35px;border-top:1px solid #fff;border-left:1px solid #fff;border-right:1px solid #808080"></div>
<div class="a " style="left:66px;top:863px;width:32px;height:32px;background:#fff"></div>
<div class="a " style="left:221px;top:860px;width:161px;height:35px;background:#fff;border:1px solid #000;border-width:1px 0 0 1px;box-shadow:inset 1px 1px 0 #808080;border-right:1px solid #d4d0c8"></div>
<div class="a " style="left:381px;top:861px;width:1px;height:34px;background:#fff"></div>
<svg style="left:68px;top:868px" width="30" height="22" viewBox="0 0 30 22"><defs><radialGradient id="og68" cx=".3" cy=".25" r=".8"><stop offset="0" stop-color="#ffe23a"/><stop offset=".35" stop-color="#f8a818"/><stop offset=".7" stop-color="#e0700c"/><stop offset="1" stop-color="#b8461a"/></radialGradient></defs><path d="M0 9 L1 5 L5 .5 L14 2 L28 5 L28 10 L24 13 L16 21 L12 21 L4 13 Z" fill="url(#og68)"/></svg>
<svg style="left:228px;top:868px" width="30" height="22" viewBox="0 0 30 22"><defs><radialGradient id="og228" cx=".3" cy=".25" r=".8"><stop offset="0" stop-color="#ffe23a"/><stop offset=".35" stop-color="#f8a818"/><stop offset=".7" stop-color="#e0700c"/><stop offset="1" stop-color="#b8461a"/></radialGradient></defs><path d="M0 9 L1 5 L5 .5 L14 2 L28 5 L28 10 L24 13 L16 21 L12 21 L4 13 Z" fill="url(#og228)"/></svg>
<div class="t " style="top:873px;left:101px;letter-spacing:.15px">Interactive - Ocean-F...</div>
<div class="t b" style="top:873px;left:261px;letter-spacing:0.61px;">Interactive [2] - O...</div>
<div class="a " style="left:1431px;top:860px;width:1166px;height:35px;border:1px solid;border-color:#808080 #fff #fff #808080;width:166px"></div>
<div class="t " style="top:865px;left:1529px;">13:49</div>
<div class="t " style="top:881px;left:1516px;">01/03/2017</div>
<svg style="left:1437px;top:871px" width="18" height="14" viewBox="0 0 18 14"><rect x="1" y="3" width="12" height="7" fill="#3cc83c" stroke="#1a8a1a"/><path d="M3 11v2M6 11v2M9 11v2" stroke="#3cc83c"/><path d="M15 2v9M15 3h2M15 6h2" stroke="#000" stroke-width="1.500"/><rect x="11" y="3" width="2" height="2" fill="#000"/></svg>
<svg style="left:1461px;top:870px" width="18" height="17" viewBox="0 0 18 17"><rect x="5.500" y="3.500" width="11" height="9" fill="#c8c8c8" stroke="#fff"/><rect x="7" y="5" width="8" height="6" fill="#b0b0b0"/><path d="M8 14.500h7" stroke="#fff" stroke-width="2"/><path d="M2.500 1v5h4V1M4.500 6v9" stroke="#fff" stroke-width="1.500" fill="none"/><path d="M2 1v5h5V1" stroke="#808080" stroke-width=".5" fill="none"/></svg>
<svg style="left:1485px;top:870px" width="18" height="18" viewBox="0 0 18 18"><path d="M1.500 6.500h2.500l4-4v12l-4-4H1.500z" fill="#e8e8e8" stroke="#909090"/><circle cx="11.500" cy="11.500" r="4.500" fill="#fff" stroke="#e02020" stroke-width="1.600"/><path d="M9.500 9.500l4 4M13.500 9.500l-4 4" stroke="#e02020" stroke-width="1.600"/></svg>
<svg style="left:1579px;top:873px" width="17" height="14" viewBox="0 0 17 14"><rect x="0" y="0" width="17" height="12" fill="#2a6ad8"/><rect x="0" y="10" width="17" height="2" fill="#1a3a8a"/><path d="M0 0h17v5L0 9z" fill="#4a90e8"/></svg>
</body></html>
